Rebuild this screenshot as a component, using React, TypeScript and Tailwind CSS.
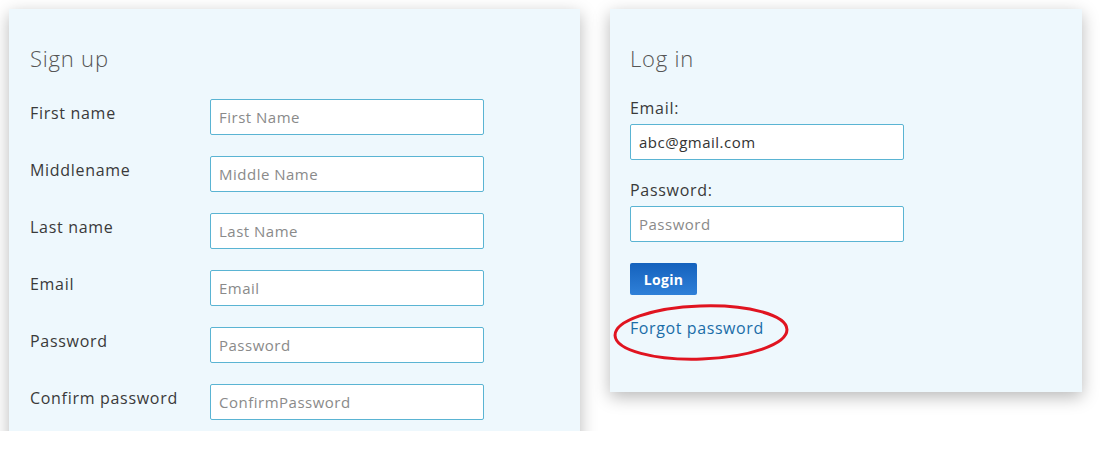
import React from "react";

const font = { fontFamily: '"Open Sans", "Noto Sans", Arial, sans-serif' };

const signupFields = [
  { label: "First name", placeholder: "First Name" },
  { label: "Middlename", placeholder: "Middle Name" },
  { label: "Last name", placeholder: "Last Name" },
  { label: "Email", placeholder: "Email" },
  { label: "Password", placeholder: "Password" },
  { label: "Confirm password", placeholder: "ConfirmPassword" },
];

const inputCls =
  "h-[36px] w-[274px] rounded-[2px] border border-[#5ab4d3] bg-white px-[8px] text-[15px] tracking-[0.5px] text-[#333] placeholder:text-[#8a8a8a] outline-none";

const labelCls = "text-[16px] font-medium leading-[20px] tracking-[0.7px] text-[#3a3a3a]";

export default function App() {
  return (
    <div className="h-[449px] w-[1101px] bg-white" style={font}>
      <div className="flex h-[431px] items-start gap-[30px] overflow-hidden pl-[9px] pt-[9px]">
        {/* sign up */}
        <div className="h-[520px] w-[571px] bg-[#eef8fd] px-[21px] pt-[36px] shadow-[0_5px_16px_rgba(0,0,0,0.28)]">
          <h2 className="text-[22px] font-light leading-[26px] tracking-[0.8px] text-[#555]">Sign up</h2>
          <div className="mt-[28px] flex flex-col gap-[21px]">
            {signupFields.map((f) => (
              <div key={f.label} className="flex items-start">
                <label className={"w-[180px] pt-[4px] " + labelCls}>{f.label}</label>
                <input className={inputCls} placeholder={f.placeholder} />
              </div>
            ))}
          </div>
        </div>

        {/* log in */}
        <div className="w-[472px] bg-[#eef8fd] px-[20px] pb-[54px] pt-[36px] shadow-[0_5px_16px_rgba(0,0,0,0.28)]">
          <h2 className="text-[22px] font-light leading-[26px] tracking-[0.8px] text-[#555]">Log in</h2>
          <label className={"mt-[27px] block " + labelCls}>Email:</label>
          <input className={inputCls + " mt-[6px] block"} defaultValue="abc@gmail.com" />
          <label className={"mt-[20px] block " + labelCls}>Password:</label>
          <input className={inputCls + " mt-[6px] block"} placeholder="Password" type="password" />
          <button className="mt-[21px] block h-[32px] w-[67px] rounded-[2px] bg-gradient-to-b from-[#1462bd] to-[#2f80d8] text-[14px] font-bold tracking-[0.3px] text-white">
            Login
          </button>
          <div className="relative mt-[23px] w-fit">
            <a className="block text-[16px] font-medium leading-[20px] tracking-[0.6px] text-[#1a6da8]" href="#">
              Forgot password
            </a>
            <svg className="pointer-events-none absolute left-[-17px] top-[-14px]" width="176" height="57" viewBox="0 0 176 57">
              <ellipse cx="88" cy="28.5" rx="86" ry="26.5" fill="none" stroke="#e01420" strokeWidth="3" transform="rotate(-2 88 28.5)" />
            </svg>
          </div>
        </div>
      </div>
    </div>
  );
}
